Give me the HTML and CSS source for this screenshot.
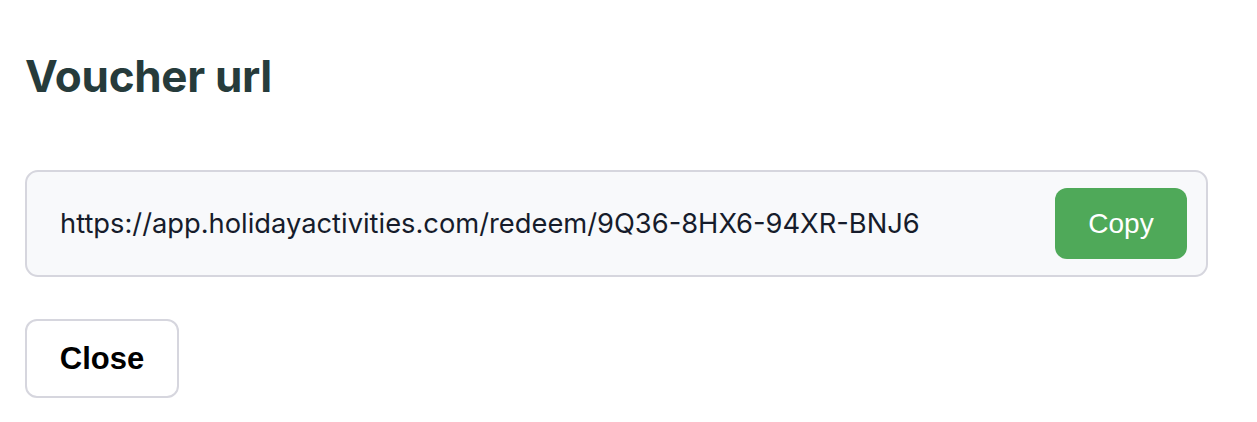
FILE: index.html
```html
<!DOCTYPE html>
<html>
<head>
<meta charset="utf-8">
<link rel="stylesheet" href="styles.css">
</head>
<body>
<div class="dialog">
  <h1 class="title">Voucher url</h1>
  <div class="url-box">
    <span class="url-text">https://app.holidayactivities.com/redeem/9Q36-8HX6-94XR-BNJ6</span>
    <button class="copy-btn">Copy</button>
  </div>
  <div class="actions">
    <button class="close-btn">Close</button>
  </div>
</div>
</body>
</html>
```
FILE: styles.css
```css
html, body {
  margin: 0;
  padding: 0;
  background: #ffffff;
}
body {
  font-family: Inter, "Liberation Sans", sans-serif;
}
.dialog {
  padding: 50px 49px 0 25px;
}
.title {
  margin: 0;
  font-size: 44px;
  font-weight: 700;
  color: #263b3b;
  line-height: 52px;
  letter-spacing: -0.3px;
}
.url-box {
  margin-top: 68px;
  height: 107px;
  box-sizing: border-box;
  border: 2px solid #d6d6de;
  border-radius: 13px;
  background: #f8f9fb;
  display: flex;
  align-items: center;
  justify-content: space-between;
  padding: 0 19px 0 33px;
}
.url-text {
  font-size: 27.3px;
  color: #161c2b;
}
.copy-btn {
  width: 132px;
  height: 71px;
  border: none;
  border-radius: 12px;
  background: #4fa959;
  color: #ffffff;
  font-family: "Liberation Sans", Arial, sans-serif;
  font-size: 28px;
}
.actions {
  margin-top: 42px;
}
.close-btn {
  width: 154px;
  height: 79px;
  box-sizing: border-box;
  border: 2px solid #d6d6de;
  border-radius: 12px;
  background: #ffffff;
  color: #000000;
  font-family: "Liberation Sans", Arial, sans-serif;
  font-size: 31px;
  font-weight: 700;
}
```
